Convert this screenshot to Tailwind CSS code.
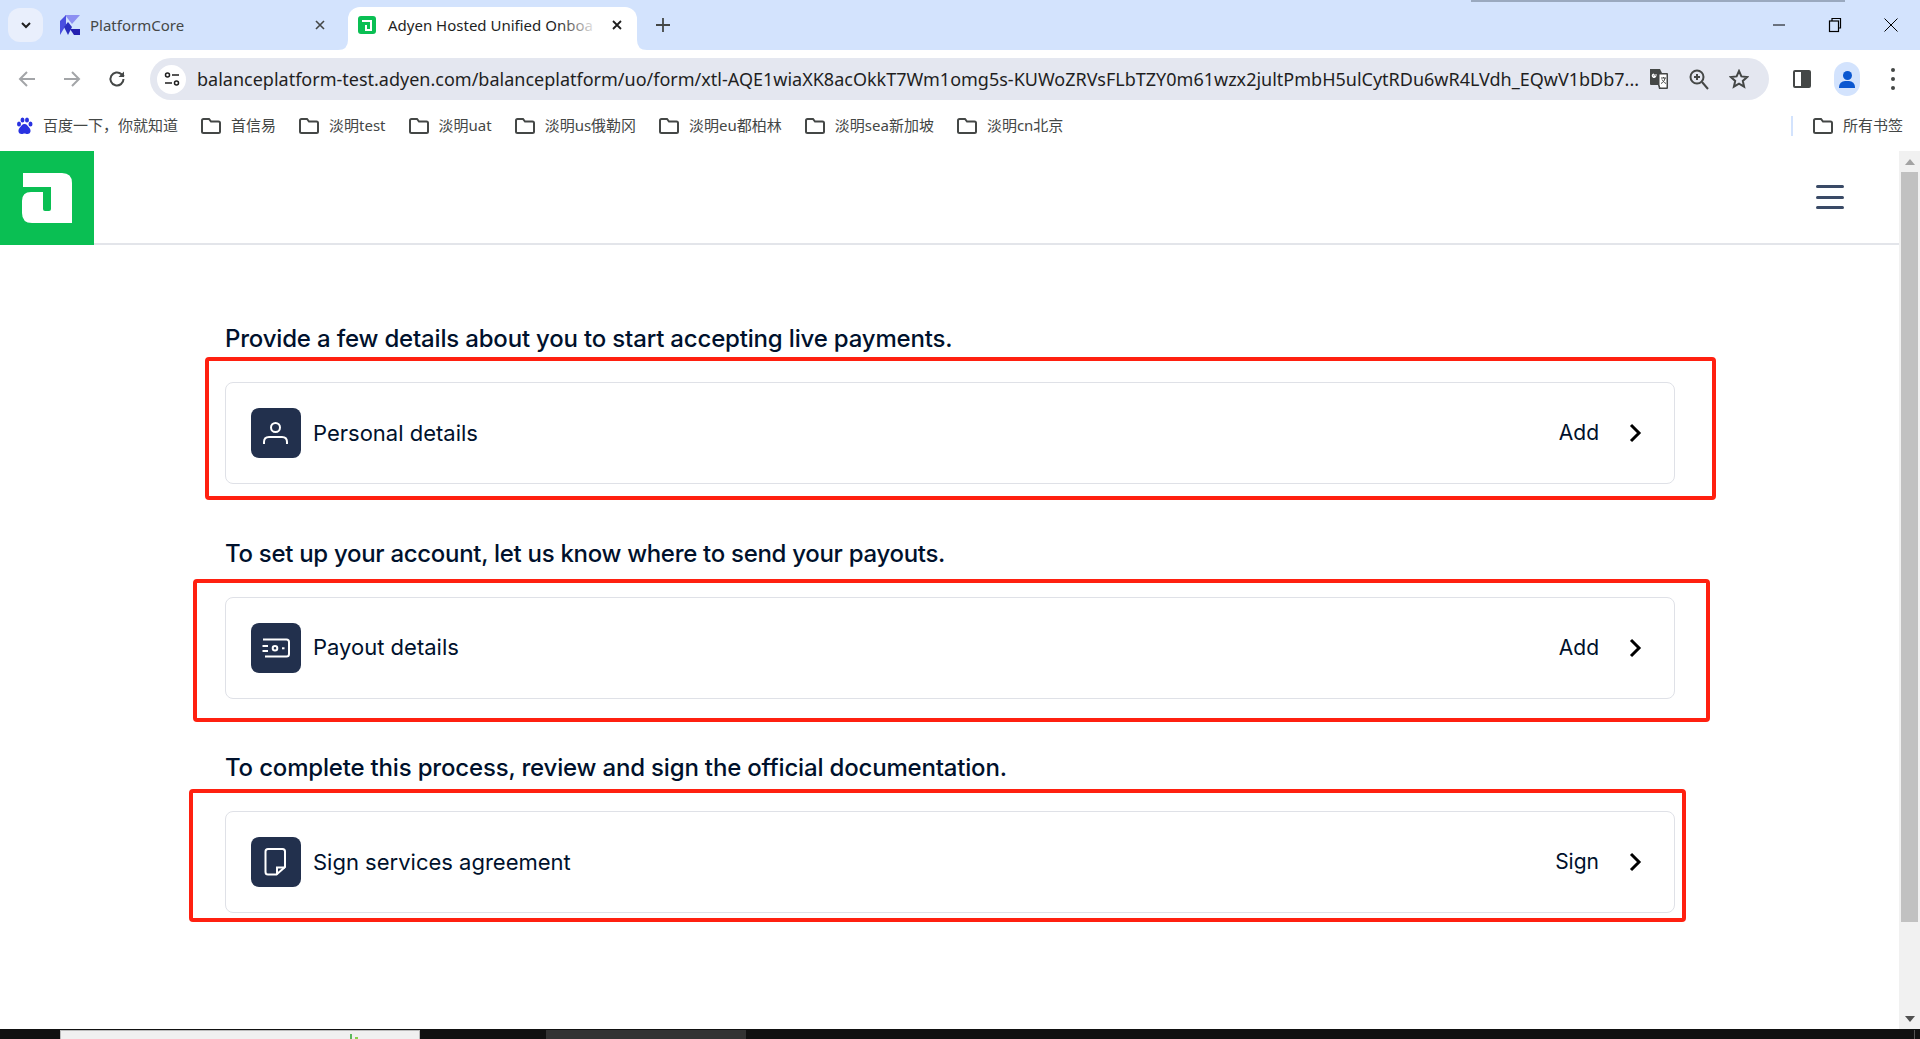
<!DOCTYPE html>
<html lang="en">
<head>
    <meta charset="UTF-8">
    <meta name="viewport" content="width=device-width, initial-scale=1.0">
    <title>Adyen Hosted Unified Onboarding</title>
    <script src="https://cdn.jsdelivr.net/npm/@tailwindcss/browser@4"></script>
</head>
<body class="h-screen overflow-hidden bg-white flex flex-col font-['Noto_Sans','Noto_Sans_CJK_SC',sans-serif]">

<!-- tab strip -->
<div class="relative h-[50px] shrink-0 bg-[#d3e3fd] flex items-end">
    <div class="absolute left-[1471px] top-0 w-[374px] h-[2px] bg-[#9aa9bf]"></div>
    <div class="ml-2 mb-2 w-[35px] h-[34px] rounded-xl bg-[#e9effc] flex items-center justify-center">
        <svg width="12" height="12" viewBox="0 0 12 12" fill="none" stroke="#1f1f1f" stroke-width="2"><path d="M2 4l4 4 4-4"/></svg>
    </div>
    <div class="ml-[17px] w-[288px] h-[43px] pb-[7px] flex items-center">
        <svg width="20" height="20" viewBox="0 0 20 20"><path d="M5 0h15l-8 9z" fill="#8c8ff2"/><path d="M0 6l6-6v10l-6 10z" fill="#4a4fe0"/><path d="M4 12l4-5 4 5-4 8z" fill="#2b2fc0"/><path d="M10 14h10v6h-6z" fill="#2420b0"/></svg>
        <span class="ml-[10px] text-[15px] text-[#444746] leading-[20px]">PlatformCore</span>
        <svg class="ml-auto mr-[23px]" width="10" height="10" viewBox="0 0 10 10" stroke="#444746" stroke-width="1.6"><path d="M1 1l8 8M9 1l-8 8"/></svg>
    </div>
    <div class="relative w-[289px] h-[43px] pb-[7px] bg-white rounded-t-xl flex items-center">
        <svg class="absolute -left-[10px] bottom-0" width="10" height="10" viewBox="0 0 10 10"><path d="M10 0v10H0q10 0 10-10z" fill="#fff"/></svg>
        <svg class="absolute -right-[10px] bottom-0" width="10" height="10" viewBox="0 0 10 10"><path d="M0 0v10h10Q0 10 0 0z" fill="#fff"/></svg>
        <div class="ml-[10px] w-[18px] h-[18px] rounded-[3px] bg-[#0abf53] flex items-center justify-center">
            <svg width="12" height="12" viewBox="0 0 12 12" fill="none" stroke="#fff" stroke-width="2"><path d="M1 2h9v9H5V6"/></svg>
        </div>
        <div class="ml-[12px] whitespace-nowrap text-[15px] text-[#1f1f1f] leading-[20px]">Adyen Hosted Unified Onboa</div>
        <div class="absolute left-[210px] top-0 w-[40px] h-full bg-gradient-to-r from-white/0 to-white"></div>
        <svg class="absolute left-[264px]" width="10" height="10" viewBox="0 0 10 10" stroke="#1f1f1f" stroke-width="1.8"><path d="M1 1l8 8M9 1l-8 8"/></svg>
    </div>
    <svg class="ml-[19px] mb-[18px]" width="14" height="14" viewBox="0 0 14 14" stroke="#444746" stroke-width="1.8"><path d="M7 0v14M0 7h14"/></svg>
    <div class="ml-auto mb-[17px] mr-[21px] flex items-center gap-[40px]">
        <svg width="16" height="16" viewBox="0 0 16 16" stroke="#000" stroke-width="1"><path d="M2 8h12"/></svg>
        <svg width="16" height="16" viewBox="0 0 16 16" fill="none" stroke="#000" stroke-width="1.2"><rect x="2.5" y="4" width="9" height="10.5"/><path d="M5 4V1.5h8.5V11h-2"/></svg>
        <svg width="16" height="16" viewBox="0 0 16 16" stroke="#000" stroke-width="1"><path d="M1.5 1.5l13 13M14.5 1.5l-13 13"/></svg>
    </div>
</div>

<!-- address bar -->
<div class="h-[50px] shrink-0 pt-[8px] bg-white rounded-t-lg flex items-center relative">
    <svg class="ml-[18px]" width="18" height="18" viewBox="0 0 18 18" fill="none" stroke="#a3a5a8" stroke-width="2"><path d="M17 9H2M9 2L2 9l7 7"/></svg>
    <svg class="ml-[27px]" width="18" height="18" viewBox="0 0 18 18" fill="none" stroke="#a3a5a8" stroke-width="2"><path d="M1 9h15M9 2l7 7-7 7"/></svg>
    <svg class="ml-[27px]" width="18" height="18" viewBox="0 0 18 18" fill="none" stroke="#444746" stroke-width="2"><path d="M15.5 9a6.5 6.5 0 1 1-2-4.7L16 6.5"/><path d="M16 1.5v5.5h-5.5" fill="#444746" stroke="none"/></svg>
    <div class="ml-[24px] w-[1619px] h-[42px] rounded-full bg-[#e4e7f0] flex items-center">
        <div class="ml-[7px] w-[29px] h-[29px] rounded-full bg-white flex items-center justify-center">
            <svg width="16" height="16" viewBox="0 0 16 16" fill="none" stroke="#1f1f1f" stroke-width="1.5"><circle cx="3.5" cy="4" r="2"/><path d="M8 4h7M1 12h7"/><circle cx="12.5" cy="12" r="2"/></svg>
        </div>
        <div class="ml-[11px] w-[1446px] whitespace-nowrap text-[18px] leading-[26px] text-[#1f1f1f]">balanceplatform-test.adyen.com/balanceplatform/uo/form/xtl-AQE1wiaXK8acOkkT7Wm1omg5s-KUWoZRVsFLbTZY0m61wzx2jultPmbH5ulCytRDu6wR4LVdh_EQwV1bDb7...</div>
        <svg class="ml-[6px]" width="20" height="22" viewBox="0 0 20 22"><path d="M1 1h10l2 4h5a1 1 0 0 1 1 1v14a1 1 0 0 1-1 1H10l-1-4H2a1 1 0 0 1-1-1z" fill="#444746"/><path d="M10 6h8v14h-7l-1-3z" fill="#fff" stroke="#444746"/><path d="M12 10h5M14.5 9v1M16 10c-.5 3-2 4.500-4 5.500M13 11.500c.7 1.500 2 3 4 4" stroke="#444746" fill="none"/><path d="M8 7H5v1.500h1.500A1.700 1.700 0 1 1 5 6" stroke="#fff" fill="none" stroke-width="1.200"/></svg>
        <svg class="ml-[20px]" width="20" height="22" viewBox="0 0 20 22" fill="none" stroke="#444746" stroke-width="2"><circle cx="8" cy="9" r="6.500"/><path d="M13 14l6 7M5 9h6M8 6v6"/></svg>
        <svg class="ml-[20px]" width="20" height="20" viewBox="0 0 20 20" fill="none" stroke="#444746" stroke-width="2"><path d="M10 2l2.400 5.400 5.800.6-4.400 3.900 1.300 5.800-5.100-3-5.100 3 1.300-5.800L1.800 8l5.800-.6z"/></svg>
    </div>
    <div class="ml-[24px] w-[18px] h-[18px] border-2 border-[#444746] rounded-[2px] flex justify-end">
        <div class="w-[8px] h-full bg-[#444746]"></div>
    </div>
    <div class="ml-[23px] w-[26px] h-[34px] rounded-full bg-[#d3e3fd] flex flex-col items-center justify-center">
        <div class="w-[9px] h-[9px] rounded-full bg-[#0b57d0]"></div>
        <div class="mt-[1px] w-[16px] h-[7px] rounded-t-md bg-[#0b57d0]"></div>
    </div>
    <div class="ml-[31px] flex flex-col gap-[5px]">
        <div class="w-[4px] h-[4px] rounded-full bg-[#444746]"></div>
        <div class="w-[4px] h-[4px] rounded-full bg-[#444746]"></div>
        <div class="w-[4px] h-[4px] rounded-full bg-[#444746]"></div>
    </div>
</div>

<!-- bookmarks -->
<div class="h-[51px] shrink-0 bg-white flex items-center text-[15px] text-[#444746] whitespace-nowrap">
    <svg class="ml-[16px]" width="17" height="18" viewBox="0 0 17 18" fill="#2932e1"><ellipse cx="3" cy="7" rx="2" ry="2.600"/><ellipse cx="6.500" cy="3" rx="2" ry="2.600"/><ellipse cx="11" cy="3" rx="2" ry="2.600"/><ellipse cx="14.500" cy="7" rx="2" ry="2.600"/><path d="M8.500 7c2.500 0 3 2 5 4 2 2.500 1 6-2 6-1.500 0-2-.5-3-.5s-1.500.5-3 .5c-3 0-4-3.500-2-6 2-2 2.500-4 5-4z"/></svg>
    <span class="ml-[10px]">百度一下，你就知道</span>
    <div class="ml-[23px] flex items-center gap-[23px]">
        <div class="flex items-center gap-[10px]"><svg width="20" height="16" viewBox="0 0 20 16" fill="none" stroke="#444746" stroke-width="2"><path d="M2.500 1H8l2 2.500h7.500A1.500 1.500 0 0 1 19 5v8.500a1.500 1.500 0 0 1-1.500 1.500h-15A1.500 1.500 0 0 1 1 13.500v-11A1.500 1.500 0 0 1 2.500 1z"/></svg><span>首信易</span></div>
        <div class="flex items-center gap-[10px]"><svg width="20" height="16" viewBox="0 0 20 16" fill="none" stroke="#444746" stroke-width="2"><path d="M2.500 1H8l2 2.500h7.500A1.500 1.500 0 0 1 19 5v8.500a1.500 1.500 0 0 1-1.500 1.500h-15A1.500 1.500 0 0 1 1 13.500v-11A1.500 1.500 0 0 1 2.500 1z"/></svg><span>淡明test</span></div>
        <div class="flex items-center gap-[10px]"><svg width="20" height="16" viewBox="0 0 20 16" fill="none" stroke="#444746" stroke-width="2"><path d="M2.500 1H8l2 2.500h7.500A1.500 1.500 0 0 1 19 5v8.500a1.500 1.500 0 0 1-1.500 1.500h-15A1.500 1.500 0 0 1 1 13.500v-11A1.500 1.500 0 0 1 2.500 1z"/></svg><span>淡明uat</span></div>
        <div class="flex items-center gap-[10px]"><svg width="20" height="16" viewBox="0 0 20 16" fill="none" stroke="#444746" stroke-width="2"><path d="M2.500 1H8l2 2.500h7.500A1.500 1.500 0 0 1 19 5v8.500a1.500 1.500 0 0 1-1.500 1.500h-15A1.500 1.500 0 0 1 1 13.500v-11A1.500 1.500 0 0 1 2.500 1z"/></svg><span>淡明us俄勒冈</span></div>
        <div class="flex items-center gap-[10px]"><svg width="20" height="16" viewBox="0 0 20 16" fill="none" stroke="#444746" stroke-width="2"><path d="M2.500 1H8l2 2.500h7.500A1.500 1.500 0 0 1 19 5v8.500a1.500 1.500 0 0 1-1.500 1.500h-15A1.500 1.500 0 0 1 1 13.500v-11A1.500 1.500 0 0 1 2.500 1z"/></svg><span>淡明eu都柏林</span></div>
        <div class="flex items-center gap-[10px]"><svg width="20" height="16" viewBox="0 0 20 16" fill="none" stroke="#444746" stroke-width="2"><path d="M2.500 1H8l2 2.500h7.500A1.500 1.500 0 0 1 19 5v8.500a1.500 1.500 0 0 1-1.500 1.500h-15A1.500 1.500 0 0 1 1 13.500v-11A1.500 1.500 0 0 1 2.500 1z"/></svg><span>淡明sea新加坡</span></div>
        <div class="flex items-center gap-[10px]"><svg width="20" height="16" viewBox="0 0 20 16" fill="none" stroke="#444746" stroke-width="2"><path d="M2.500 1H8l2 2.500h7.500A1.500 1.500 0 0 1 19 5v8.500a1.500 1.500 0 0 1-1.500 1.500h-15A1.500 1.500 0 0 1 1 13.500v-11A1.500 1.500 0 0 1 2.500 1z"/></svg><span>淡明cn北京</span></div>
    </div>
    <div class="ml-auto mr-[17px] flex items-center">
        <div class="w-[2px] h-[20px] bg-[#d3e3fd] mr-[20px]"></div>
        <div class="flex items-center gap-[10px]"><svg width="20" height="16" viewBox="0 0 20 16" fill="none" stroke="#444746" stroke-width="2"><path d="M2.500 1H8l2 2.500h7.500A1.500 1.500 0 0 1 19 5v8.500a1.500 1.500 0 0 1-1.500 1.500h-15A1.500 1.500 0 0 1 1 13.500v-11A1.500 1.500 0 0 1 2.500 1z"/></svg><span>所有书签</span></div>
    </div>
</div>

<!-- page -->
<div class="flex-1 min-h-0 flex font-[Inter] text-[#00112c]">
    <div class="flex-1 min-w-0">
        <header class="h-[94px] border-b-2 border-[#e3e5ea] flex items-start justify-between">
            <div class="w-[94px] h-[94px] bg-[#0abf53] shrink-0">
                <svg width="94" height="94" viewBox="0 0 94 94"><path d="M23 22H62Q72 22 72 32V72H32Q22 72 22 62V50Q22 41 31 41H43V58Q43 60 45 60H49Q51 60 51 58V36H23Z" fill="#fff"/></svg>
            </div>
            <div class="mt-[34px] mr-[55px] w-[28px] flex flex-col gap-[7.500px]">
                <div class="h-[3px] rounded-full bg-[#3a4a66]"></div>
                <div class="h-[3px] rounded-full bg-[#3a4a66]"></div>
                <div class="h-[3px] rounded-full bg-[#3a4a66]"></div>
            </div>
        </header>

        <main class="ml-[225px] w-[1450px] pt-[78px] flex flex-col gap-[53.500px]">
            <section>
                <h2 class="h-[32px] mb-[27px] text-[24px] leading-[32px] font-medium tracking-[-0.18px]">Provide a few details about you to start accepting live payments.</h2>
                <div class="relative h-[102px] border border-[#dfe1e7] rounded-lg flex items-center pl-[25px] pr-[32px]">
                    <div class="w-[50px] h-[50px] rounded-lg bg-[#22304d] flex items-center justify-center">
                        <svg width="50" height="50" viewBox="0 0 50 50" fill="none" stroke="#fff" stroke-width="2"><circle cx="24.500" cy="19.500" r="4.500"/><path d="M13 36v-2q0-5 5-5h13q5 0 5 5v2"/></svg>
                    </div>
                    <span class="ml-[12px] text-[22px]">Personal details</span>
                    <span class="ml-auto text-[21px]">Add</span>
                    <svg class="ml-[30px]" width="13" height="20" viewBox="0 0 13 20" fill="none" stroke="#000" stroke-width="3"><path d="M2 2l8 8-8 8"/></svg>
                    <div class="absolute -left-[21px] -top-[26px] -right-[42px] -bottom-[17px] border-4 border-[#ff2010] rounded-sm pointer-events-none"></div>
                </div>
            </section>
            <section>
                <h2 class="h-[32px] mb-[27px] text-[24px] leading-[32px] font-medium tracking-[-0.3px]">To set up your account, let us know where to send your payouts.</h2>
                <div class="relative h-[102px] border border-[#dfe1e7] rounded-lg flex items-center pl-[25px] pr-[32px]">
                    <div class="w-[50px] h-[50px] rounded-lg bg-[#22304d] flex items-center justify-center">
                        <svg width="50" height="50" viewBox="0 0 50 50" fill="none" stroke="#fff" stroke-width="2"><path d="M12 16.500H35.500a2.500 2.500 0 0 1 2.500 2.500v12a2.500 2.500 0 0 1-2.500 2.500H14M11.500 23H17M11.500 28H17"/><circle cx="24" cy="25.300" r="2.300"/><path d="M31 25.300h2.500"/></svg>
                    </div>
                    <span class="ml-[12px] text-[22px]">Payout details</span>
                    <span class="ml-auto text-[21px]">Add</span>
                    <svg class="ml-[30px]" width="13" height="20" viewBox="0 0 13 20" fill="none" stroke="#000" stroke-width="3"><path d="M2 2l8 8-8 8"/></svg>
                    <div class="absolute -left-[33px] -top-[19px] -right-[36px] -bottom-[24px] border-4 border-[#ff2010] rounded-sm pointer-events-none"></div>
                </div>
            </section>
            <section>
                <h2 class="h-[32px] mb-[27px] text-[24px] leading-[32px] font-medium tracking-[-0.18px]">To complete this process, review and sign the official documentation.</h2>
                <div class="relative h-[102px] border border-[#dfe1e7] rounded-lg flex items-center pl-[25px] pr-[32px]">
                    <div class="w-[50px] h-[50px] rounded-lg bg-[#22304d] flex items-center justify-center">
                        <svg width="50" height="50" viewBox="0 0 50 50" fill="none" stroke="#fff" stroke-width="2"><path d="M17 12H31.500a2.500 2.500 0 0 1 2.500 2.500V30l-8.500 7.500H17a2.500 2.500 0 0 1-2.500-2.500V14.500A2.500 2.500 0 0 1 17 12z"/><path d="M34 30.500H26V37.500"/></svg>
                    </div>
                    <span class="ml-[12px] text-[22px]">Sign services agreement</span>
                    <span class="ml-auto text-[21px]">Sign</span>
                    <svg class="ml-[30px]" width="13" height="20" viewBox="0 0 13 20" fill="none" stroke="#000" stroke-width="3"><path d="M2 2l8 8-8 8"/></svg>
                    <div class="absolute -left-[37px] -top-[23px] -right-[12px] -bottom-[10px] border-4 border-[#ff2010] rounded-sm pointer-events-none"></div>
                </div>
            </section>
        </main>
    </div>

    <!-- scrollbar -->
    <div class="w-[21px] shrink-0 bg-[#f1f1f1] flex flex-col items-center">
        <div class="h-[21px] flex items-center justify-center">
            <div class="w-0 h-0 border-x-[5px] border-x-transparent border-b-[6px] border-b-[#a3a3a3]"></div>
        </div>
        <div class="w-[17px] h-[750px] bg-[#c1c1c1]"></div>
        <div class="mt-auto h-[21px] flex items-center justify-center">
            <div class="w-0 h-0 border-x-[5px] border-x-transparent border-t-[6px] border-t-[#505050]"></div>
        </div>
    </div>
</div>

<!-- taskbar -->
<div class="h-[10px] shrink-0 bg-[#111111] flex items-end">
    <div class="relative ml-[60px] w-[360px] h-[9px] bg-[#f0f0f0] border-t border-x border-[#bbbbbb]">
        <div class="absolute left-[289px] top-[3px] w-[2px] h-[6px] bg-[#5cb85c]"></div>
        <div class="absolute left-[294px] top-[6px] w-[3px] h-[3px] bg-[#8ccf4d]"></div>
    </div>
    <div class="ml-[126px] w-[200px] h-[9px] bg-[#333333]"></div>
    <span class="ml-auto mr-[92px] self-start mt-[8px] text-[10px] leading-[12px] h-[2px] overflow-hidden text-white">10:12</span>
    <div class="w-px h-[9px] bg-[#555555] mr-[5px]"></div>
</div>

</body>
</html>
